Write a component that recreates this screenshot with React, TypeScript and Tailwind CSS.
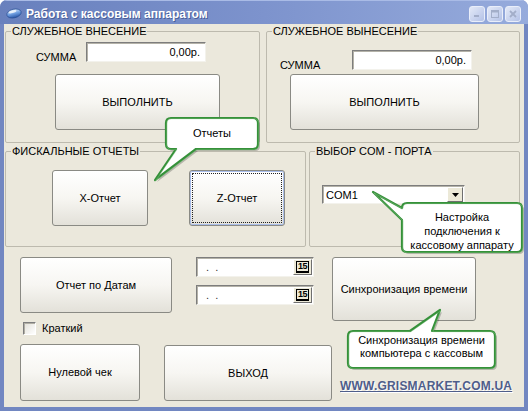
import React from "react";

// кнопка в стиле XP
const btn =
  "flex items-center justify-center shrink-0 rounded-[3px] border border-[#8a8a84] bg-linear-to-b from-white via-[#f7f6f2] to-[#e3e1d9] text-[11px] leading-[13px] text-black";

const sunken =
  "flex items-center shrink-0 bg-white border border-t-[#7d7d7d] border-l-[#7d7d7d] border-r-[#f3f2ec] border-b-[#f3f2ec] shadow-[inset_1px_1px_0_#b4b2a8]";

function GroupBox({ title, className, children }: { title: string; className: string; children?: React.ReactNode }) {
  return (
    <fieldset className={"shrink-0 border border-[#bdbaae] rounded-[2px] " + className}>
      <legend className="ml-[5px] px-[1px] text-[11px] leading-[13px]">{title}</legend>
      {children}
    </fieldset>
  );
}

function DateField() {
  return (
    <div className={sunken + " h-[20px] w-[118px] justify-between pl-[6px] pr-[1px]"}>
      <span className="whitespace-pre text-[11px] leading-[12px] text-[#333]">{" .  ."}</span>
      <span className="flex h-[16px] w-[19px] items-center justify-center border border-t-white border-l-white border-r-[#6f6f6f] border-b-[#6f6f6f] bg-[#ece9d8]">
        <span className="border border-black border-b-2 px-[1px] text-[9px] font-bold leading-[9px] tracking-[-0.5px]">15</span>
      </span>
    </div>
  );
}

function Balloon({ box, view, d, text }: { box: string; view: string; d: string; text: string }) {
  return (
    <svg className={"absolute pointer-events-none " + box} viewBox={view}>
      <path d={d} transform="translate(2 2)" fill="#000" opacity="0.22" />
      <path d={d} fill="#fff" stroke="#36913a" strokeWidth="2.2" strokeLinejoin="round" />
      <path d={d} fill="none" stroke="#9ad09a" strokeWidth="0.6" transform="translate(0.8 0.8)" opacity="0.6" />
      <title>{text}</title>
    </svg>
  );
}

function TitleButton({ kind }: { kind: "min" | "max" | "close" }) {
  return (
    <div className="flex h-[16px] w-[16px] items-center justify-center rounded-[3px] border border-[#e9eefa] bg-linear-to-br from-[#e3e9f7] to-[#b4c2e7]">
      <svg width="10" height="10" viewBox="0 0 10 10">
        {kind === "min" && <rect x="2" y="6" width="5" height="2" fill="#a3aec9" />}
        {kind === "max" && (
          <g stroke="#a3aec9" fill="none">
            <rect x="1.5" y="1.5" width="7" height="7" />
            <line x1="1.5" y1="2.5" x2="8.5" y2="2.5" strokeWidth="2" />
          </g>
        )}
        {kind === "close" && (
          <g stroke="#a3aec9" strokeWidth="1.8">
            <line x1="2" y1="2" x2="8" y2="8" />
            <line x1="8" y1="2" x2="2" y2="8" />
          </g>
        )}
      </svg>
    </div>
  );
}

export default function App() {
  return (
    <div className="relative h-[411px] w-[528px] bg-white font-['Liberation_Sans',Arial,sans-serif] text-[11px] text-black select-none">
      <div className="flex h-full w-full flex-col overflow-hidden rounded-t-[7px] bg-[#7287c1]">
        {/* заголовок окна */}
        <div className="flex h-[24px] shrink-0 items-center bg-linear-to-r from-[#6880bd] via-[#7d93cd] to-[#96abdc] pt-[3px] pl-[6px] pr-[7px] shadow-[inset_0_1px_0_#a9bbe6]">
          <svg width="16" height="11" viewBox="0 0 16 11" className="shrink-0">
            <defs>
              <linearGradient id="pill" x1="0" y1="0" x2="0" y2="1">
                <stop offset="0" stopColor="#d8e8fb" />
                <stop offset="0.5" stopColor="#6f9ee0" />
                <stop offset="1" stopColor="#2a56a6" />
              </linearGradient>
            </defs>
            <ellipse cx="8" cy="5.5" rx="7.3" ry="4.3" transform="rotate(-14 8 5.5)" fill="url(#pill)" stroke="#294f94" strokeWidth="0.7" />
            <ellipse cx="6.5" cy="3.8" rx="4" ry="1.3" transform="rotate(-14 6.5 3.8)" fill="#fff" opacity="0.75" />
          </svg>
          <span className="ml-[4px] text-[12px] font-bold leading-[14px] text-white [text-shadow:1px_1px_0_#4a5f99]">
            Работа с кассовым аппаратом
          </span>
          <div className="ml-auto flex gap-[2px]">
            <TitleButton kind="min" />
            <TitleButton kind="max" />
            <TitleButton kind="close" />
          </div>
        </div>

        {/* клиентская область */}
        <div className="mx-[4px] mb-[4px] flex flex-1 flex-col bg-[#ebe8dc] pt-[1px]">
          <div className="flex gap-[6px] pl-[1px]">
            <GroupBox title="СЛУЖЕБНОЕ ВНЕСЕНИЕ" className="h-[118px] w-[255px]">
              <div className="mt-[4px] flex items-end pl-[30px]">
                <span className="w-[50px] leading-[10px]">СУММА</span>
                <div className={sunken + " h-[20px] w-[120px] justify-end pr-[5px]"}>
                  <span className="leading-[12px]">0,00р.</span>
                </div>
              </div>
              <button className={btn + " mt-[12px] ml-[49px] h-[56px] w-[165px]"}>ВЫПОЛНИТЬ</button>
            </GroupBox>
            <GroupBox title="СЛУЖЕБНОЕ ВЫНЕСЕНИЕ" className="h-[118px] w-[254px]">
              <div className="mt-[12px] flex items-end pl-[13px]">
                <span className="w-[72px] leading-[10px]">СУММА</span>
                <div className={sunken + " h-[20px] w-[120px] justify-end pr-[5px]"}>
                  <span className="leading-[12px]">0,00р.</span>
                </div>
              </div>
              <button className={btn + " mt-[4px] ml-[23px] h-[56px] w-[189px]"}>ВЫПОЛНИТЬ</button>
            </GroupBox>
          </div>

          <div className="mt-[2px] flex gap-[3px] pl-[1px]">
            <GroupBox title="ФИСКАЛЬНЫЕ ОТЧЕТЫ" className="h-[102px] w-[301px]">
              <div className="mt-[12px] flex gap-[41px] pl-[46px]">
                <button className={btn + " h-[56px] w-[96px]"}>X-Отчет</button>
                <button
                  className={
                    btn +
                    " h-[56px] w-[96px] border-[#4d5ea6] shadow-[inset_0_0_0_1px_#a9bde9] outline-1 outline-dotted outline-[#222] -outline-offset-4"
                  }
                >
                  Z-Отчет
                </button>
              </div>
            </GroupBox>
            <GroupBox title="ВЫБОР COM - ПОРТА" className="h-[102px] w-[211px]">
              <div className={sunken + " mt-[27px] ml-[12px] h-[19px] w-[143px] justify-between pl-[3px] pr-[1px]"}>
                <span className="leading-[12px]">COM1</span>
                <span className="flex h-[15px] w-[16px] items-center justify-center border border-t-white border-l-white border-r-[#6f6f6f] border-b-[#6f6f6f] bg-[#ece9d8]">
                  <svg width="7" height="4" viewBox="0 0 7 4">
                    <path d="M0 0H7L3.5 4Z" fill="#000" />
                  </svg>
                </span>
              </div>
            </GroupBox>
          </div>

          <div className="flex flex-col pl-[16px]">
            <div className="mt-[10px] flex items-start">
              <button className={btn + " h-[56px] w-[152px]"}>Отчет по Датам</button>
              <div className="ml-[24px] flex flex-col gap-[8px]">
                <DateField />
                <DateField />
              </div>
              <button className={btn + " ml-[18px] h-[64px] w-[144px]"}>Синхронизация времени</button>
            </div>
            <div className="mt-[1px] flex items-center pl-[3px]">
              <span className="h-[13px] w-[13px] border border-t-[#7d7d7d] border-l-[#7d7d7d] border-r-white border-b-white bg-linear-to-br from-[#e2e0d8] to-white shadow-[inset_1px_1px_0_#b0aea4]" />
              <span className="ml-[6px] leading-[13px]">Краткий</span>
            </div>
            <div className="mt-[9px] flex items-end">
              <button className={btn + " h-[57px] w-[120px]"}>Нулевой чек</button>
              <button className={btn + " ml-[24px] h-[56px] w-[168px]"}>ВЫХОД</button>
              <a className="mb-[8px] ml-[8px] text-[12px] font-bold leading-[13px] tracking-[0.2px] text-[#4f5e8a] underline underline-offset-[1px] [text-shadow:1px_1px_0_#ffffff]">
                WWW.GRISMARKET.COM.UA
              </a>
            </div>
          </div>
        </div>
      </div>

      {/* подсказки */}
      <Balloon
        box="left-[150px] top-[114px] w-[114px] h-[70px]"
        view="150 114 114 70"
        d="M171 118H253Q258 118 258 123V144Q258 149 253 149H196L155 180L176 149H171Q166 149 166 144V123Q166 118 171 118Z"
        text="Отчеты"
      />
      <div className="absolute left-[166px] top-[118px] flex h-[31px] w-[92px] items-center justify-center text-[11px] leading-[13px]">
        Отчеты
      </div>

      <Balloon
        box="left-[368px] top-[186px] w-[160px] h-[72px]"
        view="368 186 160 72"
        d="M407 203H517Q522 203 522 208V247Q522 252 517 252H407Q402 252 402 247V220L373 192L402 208Q402 203 407 203Z"
        text="Настройка подключения к кассовому аппарату"
      />
      <div className="absolute left-[402px] top-[203px] flex h-[49px] w-[120px] flex-col items-center justify-center pt-[7px] text-center text-[11px] leading-[14px]">
        <span>Настройка</span>
        <span>подключения к</span>
        <span>кассовому аппарату</span>
      </div>

      <Balloon
        box="left-[344px] top-[306px] w-[156px] h-[68px]"
        view="344 306 156 68"
        d="M353 331H410L440 310L432 331H490Q495 331 495 336V363Q495 368 490 368H353Q348 368 348 363V336Q348 331 353 331Z"
        text="Синхронизация времени компьютера с кассовым"
      />
      <div className="absolute left-[348px] top-[331px] flex h-[37px] w-[147px] flex-col items-center justify-center pb-[6px] text-center text-[11px] leading-[13px]">
        <span>Синхронизация времени</span>
        <span>компьютера с кассовым</span>
      </div>
    </div>
  );
}
